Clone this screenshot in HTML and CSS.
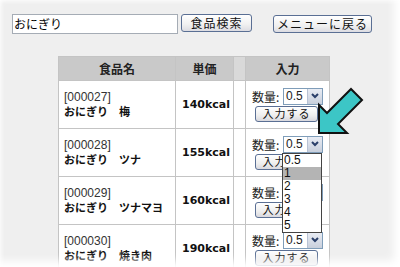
FILE: index.html
```html
<!DOCTYPE html>
<html lang="ja">
<head>
<meta charset="utf-8">
<link rel="stylesheet" href="styles.css">
</head>
<body>
<div class="frame">
  <div class="toolbar">
    <div class="search">おにぎり</div>
    <div class="btn btn-search">食品検索</div>
    <div class="btn btn-menu">メニューに戻る</div>
  </div>
  <table class="list">
    <colgroup><col class="c-name"><col class="c-price"><col class="c-gap"><col class="c-in"></colgroup>
    <thead>
      <tr><th>食品名</th><th>単価</th><th class="gap"></th><th>入力</th></tr>
    </thead>
    <tbody>
      <tr>
        <td class="name"><div class="code">[000027]</div><div class="title">おにぎり　梅</div></td>
        <td class="price">140kcal</td><td class="gap"></td>
        <td class="inp"><div class="qty"><span class="lbl">数量:</span><span class="sel"><span class="val">0.5</span><span class="drop"><svg width="8" height="6" viewBox="0 0 8 6"><path d="M1 1 L4 4 L7 1" fill="none" stroke="#2a3f6a" stroke-width="2"/></svg></span></span></div><div class="ibtn">入力する</div></td>
      </tr>
      <tr>
        <td class="name"><div class="code">[000028]</div><div class="title">おにぎり　ツナ</div></td>
        <td class="price">155kcal</td><td class="gap"></td>
        <td class="inp"><div class="qty"><span class="lbl">数量:</span><span class="sel"><span class="val">0.5</span><span class="drop"><svg width="8" height="6" viewBox="0 0 8 6"><path d="M1 1 L4 4 L7 1" fill="none" stroke="#2a3f6a" stroke-width="2"/></svg></span></span></div><div class="ibtn">入力する</div></td>
      </tr>
      <tr>
        <td class="name"><div class="code">[000029]</div><div class="title">おにぎり　ツナマヨ</div></td>
        <td class="price">160kcal</td><td class="gap"></td>
        <td class="inp"><div class="qty"><span class="lbl">数量:</span><span class="sel"><span class="val">0.5</span><span class="drop"><svg width="8" height="6" viewBox="0 0 8 6"><path d="M1 1 L4 4 L7 1" fill="none" stroke="#2a3f6a" stroke-width="2"/></svg></span></span></div><div class="ibtn">入力する</div></td>
      </tr>
      <tr>
        <td class="name"><div class="code">[000030]</div><div class="title">おにぎり　焼き肉</div></td>
        <td class="price">190kcal</td><td class="gap"></td>
        <td class="inp"><div class="qty"><span class="lbl">数量:</span><span class="sel"><span class="val">0.5</span><span class="drop"><svg width="8" height="6" viewBox="0 0 8 6"><path d="M1 1 L4 4 L7 1" fill="none" stroke="#2a3f6a" stroke-width="2"/></svg></span></span></div><div class="ibtn">入力する</div></td>
      </tr>
    </tbody>
  </table>
  <ul class="options">
    <li>0.5</li><li class="hl">1</li><li>2</li><li>3</li><li>4</li><li>5</li>
  </ul>
  <svg class="arrow" width="60" height="60" viewBox="310 80 60 60">
    <polygon points="319,133 319,105 327,113 351,89 362,100 338,124 347,133" fill="#3cc6c6" stroke="#111" stroke-width="2" stroke-linejoin="miter"/>
  </svg>
  <div class="fade"></div>
</div>
</body>
</html>
```
FILE: styles.css
```css
html, body { margin: 0; padding: 0; }
body { background: #fff; font-family: "Noto Sans CJK JP", sans-serif; }
.frame {
  position: relative;
  width: 400px; height: 267px;
  background: #efefef;
  overflow: hidden;
}
.toolbar {
  display: flex;
  align-items: flex-start;
  padding: 14px 0 0 12px;
  height: 19px;
}
.search {
  box-sizing: border-box;
  width: 166px; height: 20px;
  background: #fff;
  border: 1px solid #a5acb5;
  font-size: 12px; line-height: 18px;
  padding-left: 1px;
  color: #000;
}
.btn {
  box-sizing: border-box;
  height: 18px;
  border: 1px solid #5a6f94;
  border-radius: 3px;
  background: linear-gradient(#ffffff, #f0f0f0 60%, #dcdce2);
  font-size: 12px; line-height: 15px;
  text-align: center;
  color: #111;
  letter-spacing: 1px;
}
.btn-search { width: 71px; margin-left: 3px; }
.btn-menu { width: 99px; margin-left: 21px; margin-top: 1px; }
.list {
  margin: 23px 0 0 58px;
  border-collapse: collapse;
  table-layout: fixed;
  width: 271px;
}
.c-name { width: 117px; }
.c-price { width: 58px; }
.c-gap { width: 12px; }
.c-in { width: 84px; }
.list th, .list td { border: 1px solid #c4c4c4; padding: 0; }
.list th {
  height: 23px;
  background: #c9c9c9;
  font-size: 12px; font-weight: bold; color: #222;
  text-align: center;
}
.list th.gap { background: #d9d9d9; }
.list td { background: #fff; height: 47px; vertical-align: middle; }
.list td.gap { background: #fff; }
.name { padding-left: 5px !important; }
.code { font-family: "Liberation Sans", sans-serif; font-size: 12px; line-height: 14px; color: #333; }
.title { font-size: 11px; font-weight: bold; line-height: 15px; color: #111; }
.price { font-family: "DejaVu Sans", sans-serif; font-weight: bold; font-size: 11px; padding-left: 6px !important; color: #111; }
.inp { padding: 0 0 0 6px !important; }
.qty { display: flex; align-items: center; height: 18px; }
.lbl { font-size: 12px; color: #222; width: 31px; }
.sel {
  box-sizing: border-box;
  display: flex; align-items: center;
  width: 40px; height: 17px;
  border: 1px solid #7f9db9;
  background: #fff;
}
.val { flex: 1; font-family: "Liberation Sans", sans-serif; font-size: 12px; padding-left: 2px; color: #222; }
.drop {
  display: flex; align-items: center; justify-content: center;
  width: 14px; height: 15px;
  background: linear-gradient(#e8ecf4, #c8cfdc);
  border-left: 1px solid #b8c2d4;
}
.ibtn {
  box-sizing: border-box;
  width: 63px; height: 16px;
  margin: 1px 0 0 3px;
  border: 1px solid #5a6f94;
  border-radius: 3px;
  background: linear-gradient(#ffffff, #eeeeee 60%, #d8d8de);
  font-size: 11px; line-height: 13px; text-align: center; color: #111;
  letter-spacing: 1px;
}
.options {
  position: absolute;
  left: 282px; top: 153px;
  width: 40px;
  margin: 0; padding: 0;
  list-style: none;
  box-sizing: border-box;
  background: #fff;
  border: 1px solid #444;
  font-family: "Liberation Sans", sans-serif;
  font-size: 12px;
  color: #111;
}
.options li { height: 13px; line-height: 13px; padding-left: 1px; }
.options li.hl { background: #b4b4b4; }
.arrow { position: absolute; left: 310px; top: 80px; }
.fade {
  position: absolute; inset: 0;
  pointer-events: none;
  box-shadow: inset -10px -10px 8px -4px #fff, inset 3px 3px 4px -2px #fff;
}
```
